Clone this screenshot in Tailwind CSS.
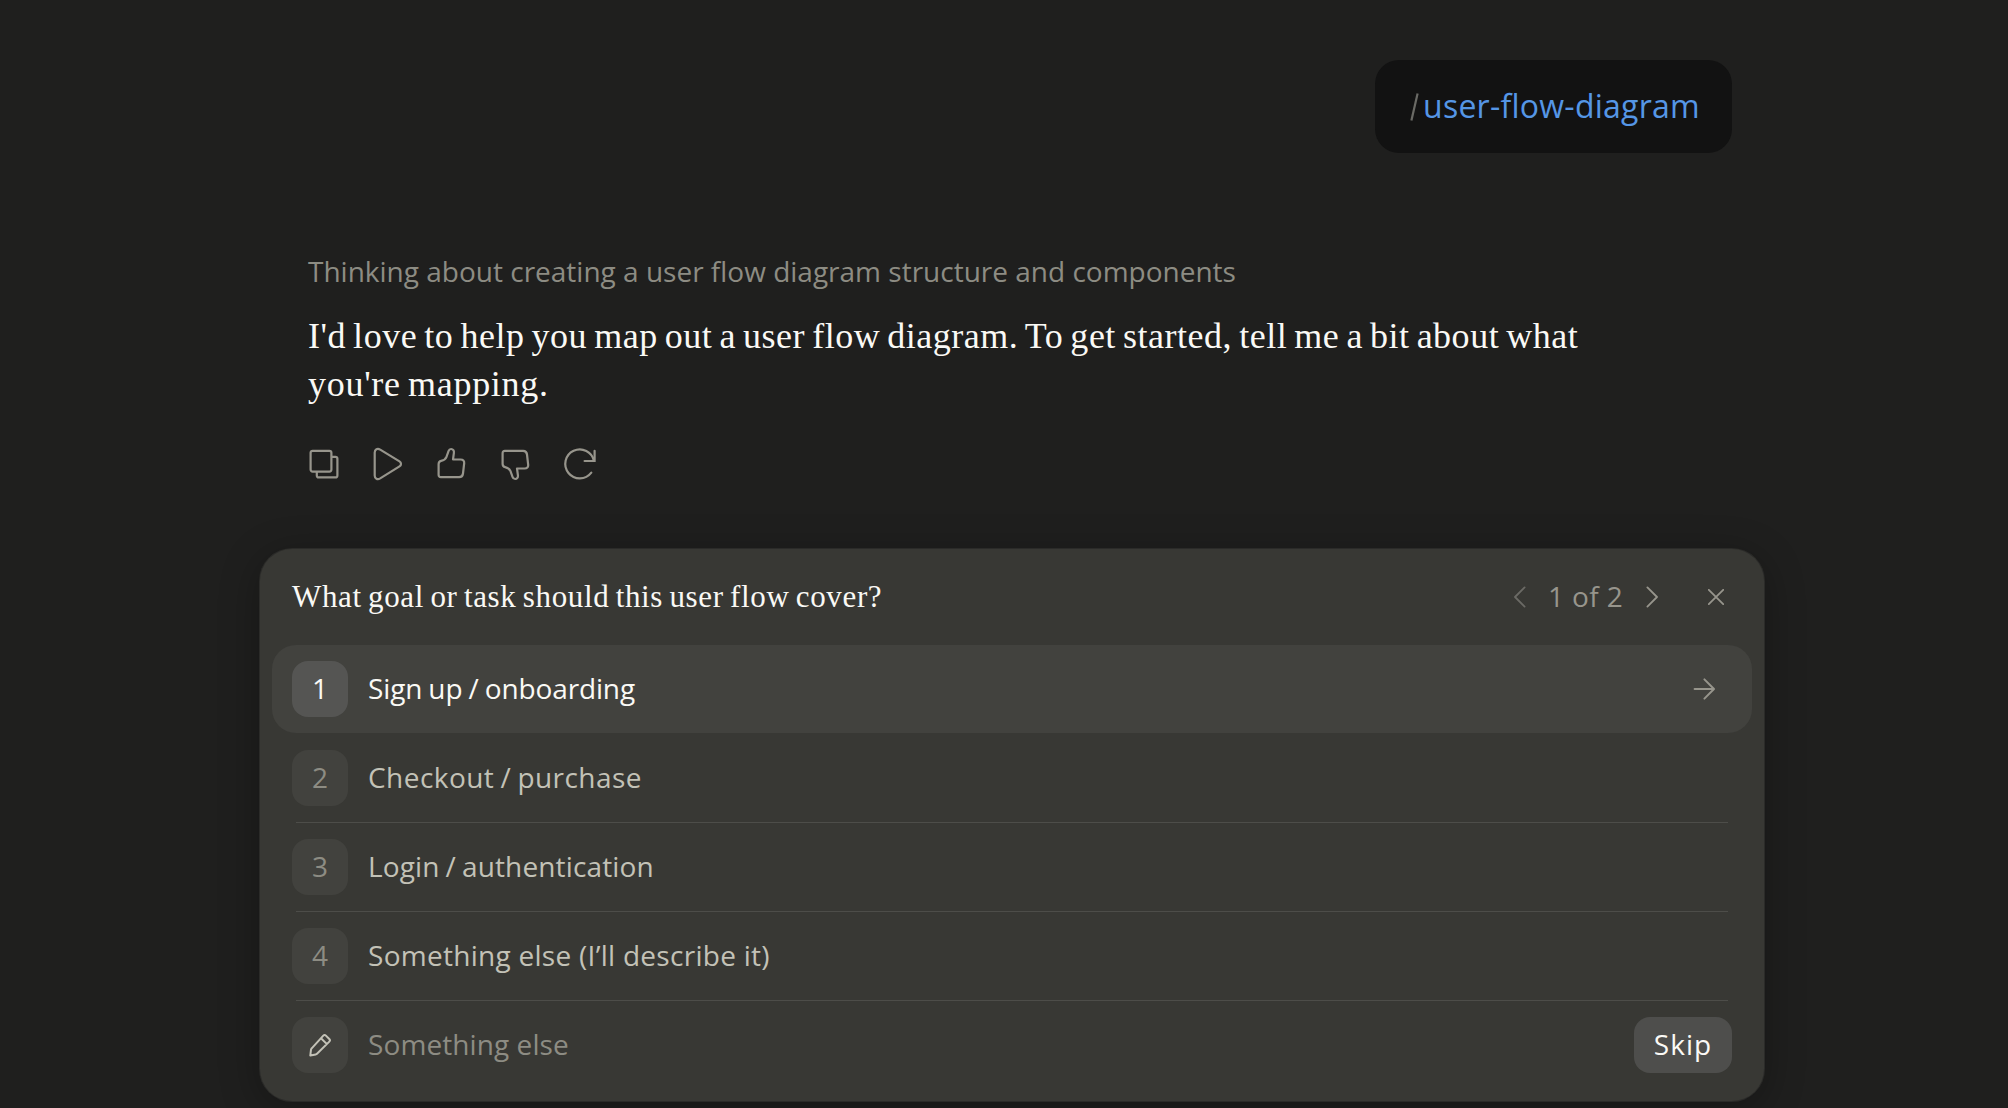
<!DOCTYPE html>
<html lang="en">
<head>
    <meta charset="UTF-8">
    <meta name="viewport" content="width=device-width, initial-scale=1.0">
    <title>User flow diagram</title>
    <script src="https://cdn.jsdelivr.net/npm/@tailwindcss/browser@4"></script>
</head>
<body class="bg-[#1f1f1e] h-screen overflow-hidden font-['Open_Sans',sans-serif] text-[28px] text-[#c3c2b7]">
    <div class="w-[1504px] ml-[260px] pt-[60px]">
        <!-- User message -->
        <div class="flex justify-end pr-8">
            <div class="flex items-center w-[357px] h-[93px] pl-9 pb-px rounded-3xl bg-[#121212] text-[32px] whitespace-nowrap">
                <span class="w-[12px] text-[#6a6a65]"><svg class="w-[9px] h-7 mt-0.5 -ml-px" viewBox="0 0 9 28" fill="none" stroke="currentColor" stroke-width="2.2"><path d="M7.6 0.5 1.4 27.5" /></svg></span>
                <span class="tracking-[0.25px] leading-10 text-[#5596e6]">user-flow-diagram</span>
            </div>
        </div>

        <!-- Reply -->
        <div class="pl-12 pt-[98px]">
            <div class="h-10 leading-10 text-[#8d8c83] whitespace-nowrap">Thinking about creating a user flow diagram structure and components</div>
            <div class="mt-[21px] font-['Liberation_Serif',serif] text-[36px] leading-12 text-[#faf9f5] whitespace-nowrap">
                <p class="tracking-[0.51px] [word-spacing:-2.4px]">I'd love to help you map out a user flow diagram. To get started, tell me a bit about what</p>
                <p class="tracking-[0.71px] [word-spacing:-2.4px]">you're mapping.</p>
            </div>

            <div class="flex gap-8 mt-10 text-[#97958c]">
                <button aria-label="Copy">
                    <svg class="w-8 h-8 overflow-visible" viewBox="0 0 32 32" fill="none" stroke="currentColor" stroke-width="2.2" stroke-linejoin="round">
                        <rect x="2.6" y="2.8" width="20.8" height="20.8" rx="2" />
                        <path d="M23.4 8.8h4a2 2 0 0 1 2 2v16.6a2 2 0 0 1-2 2H10.800a2 2 0 0 1-2-2v-3.800" />
                    </svg>
                </button>
                <button aria-label="Read aloud">
                    <svg class="w-8 h-8 overflow-visible" viewBox="0 0 32 32" fill="none" stroke="currentColor" stroke-width="2.2" stroke-linejoin="round">
                        <path d="M2.700 4.600c0-3.200 2.700-4.600 5.500-3l19.300 11.800c2 1.300 2 3.700 0 5L8.200 30.400c-2.800 1.600-5.500.2-5.500-3z" />
                    </svg>
                </button>
                <button aria-label="Good response">
                    <svg class="w-8 h-8 overflow-visible" viewBox="0 0 32 32" fill="none" stroke="currentColor" stroke-width="2.2" stroke-linejoin="round">
                        <path d="M2.600 16a3.200 3.200 0 0 1 2.500-3.100c2.700-.6 4.500-1.700 5.400-4.100l2-5.600c.5-1.400 1.300-2.200 2.600-2.200 2 0 3.100 1.700 2.800 3.800l-.9 6.700h7.700c2.300 0 3.700 1.400 3.500 3.600l-1.200 10.400c-.3 2.400-1.500 3.600-3.800 3.600H4.900c-1.500 0-2.300-.8-2.300-2.300z" />
                    </svg>
                </button>
                <button aria-label="Bad response">
                    <svg class="w-8 h-8 overflow-visible -scale-y-100" viewBox="0 0 32 32" fill="none" stroke="currentColor" stroke-width="2.2" stroke-linejoin="round">
                        <path d="M2.600 16a3.200 3.200 0 0 1 2.500-3.100c2.700-.6 4.500-1.700 5.400-4.100l2-5.600c.5-1.400 1.300-2.200 2.600-2.200 2 0 3.100 1.700 2.800 3.800l-.9 6.700h7.700c2.300 0 3.700 1.400 3.500 3.600l-1.200 10.400c-.3 2.400-1.500 3.600-3.800 3.600H4.900c-1.500 0-2.300-.8-2.300-2.300z" />
                    </svg>
                </button>
                <button aria-label="Retry">
                    <svg class="w-8 h-8 overflow-visible" viewBox="0 0 32 32" fill="none" stroke="currentColor" stroke-width="2.2" stroke-linecap="round">
                        <path d="M27.300 24.700A14.500 14.500 0 1 1 30 13" />
                        <path d="M30.600 2.800V13H20.600" />
                    </svg>
                </button>
            </div>
        </div>

        <!-- Question card -->
        <div class="mt-[69px] h-[552px] px-3 rounded-[32px] bg-[#383834] shadow-[0_0_0_1px_#2b2b29,0_8px_40px_rgba(0,0,0,0.3)]">
            <div class="flex items-center h-24 pl-5 pr-7">
                <h2 class="flex-1 font-['Liberation_Serif',serif] text-[31px] tracking-[0.64px] [word-spacing:-2px] leading-10 text-[#faf9f5]">What goal or task should this user flow cover?</h2>
                <div class="flex items-center text-[#97958c]">
                    <svg class="w-3 h-6 text-[#6b6a65]" viewBox="0 0 12 24" fill="none" stroke="currentColor" stroke-width="1.8" stroke-linecap="round" stroke-linejoin="round"><path d="M10.600 2.400 1 12l9.600 9.600" /></svg>
                    <span class="w-[76px] ml-[22px] leading-10 tracking-[0.4px] pb-0.5 whitespace-nowrap">1 of 2</span>
                    <svg class="w-3 h-6 ml-[22px]" viewBox="0 0 12 24" fill="none" stroke="currentColor" stroke-width="1.8" stroke-linecap="round" stroke-linejoin="round"><path d="M1.400 2.400 11 12l-9.600 9.600" /></svg>
                    <svg class="w-4 h-4 ml-[50px]" viewBox="0 0 16 16" fill="none" stroke="currentColor" stroke-width="1.8" stroke-linecap="round"><path d="M.8.8l14.400 14.400M15.200.8.8 15.200" /></svg>
                </div>
            </div>

            <div class="flex items-center h-[88px] px-5 rounded-3xl bg-[#42423e] text-[#faf9f5]">
                <span class="flex justify-center w-14 h-14 rounded-2xl bg-[#555553] leading-[54px]">1</span>
                <span class="flex-1 pl-5 pb-0.5 tracking-[-0.14px] [word-spacing:-1px]">Sign up / onboarding</span>
                <svg class="w-6 h-6 mr-4 text-[#97958c]" viewBox="0 0 24 24" fill="none" stroke="currentColor" stroke-width="2" stroke-linecap="round" stroke-linejoin="round"><path d="M2.600 12h19M12.400 2.400 22 12l-9.600 9.600" /></svg>
            </div>

            <div class="flex items-center h-[89px] pt-px px-5">
                <span class="flex justify-center w-14 h-14 rounded-2xl bg-[#42423e] leading-[54px] text-[#8d8c83]">2</span>
                <span class="pl-5 pb-0.5 tracking-[0.45px] [word-spacing:-1.5px]">Checkout / purchase</span>
            </div>
            <div class="h-px mx-6 bg-[#4d4d49]"></div>
            <div class="flex items-center h-[88px] px-5">
                <span class="flex justify-center w-14 h-14 rounded-2xl bg-[#42423e] leading-[54px] text-[#8d8c83]">3</span>
                <span class="pl-5 pb-0.5 tracking-[0.15px] [word-spacing:-1.5px]">Login / authentication</span>
            </div>
            <div class="h-px mx-6 bg-[#4d4d49]"></div>
            <div class="flex items-center h-[88px] px-5">
                <span class="flex justify-center w-14 h-14 rounded-2xl bg-[#42423e] leading-[54px] text-[#8d8c83]">4</span>
                <span class="pl-5 pb-0.5 tracking-[0.28px]">Something else (I’ll describe it)</span>
            </div>
            <div class="h-px mx-6 bg-[#4d4d49]"></div>
            <div class="flex items-center h-[88px] px-5">
                <span class="flex items-center justify-center w-14 h-14 rounded-2xl bg-[#42423e]">
                    <svg class="w-6 h-6" viewBox="0 0 24 24" fill="none" stroke="currentColor" stroke-width="2" stroke-linejoin="round">
                        <path d="M15.300 2.600c.8-.8 1.800-.8 2.600 0l3.400 3.400c.8.8.8 1.800 0 2.600L9 20.700c-.4.4-.8.600-1.300.700l-5.400 1.100.7-5.800c.1-.6.300-1 .7-1.400zM13 5.200l5.700 5.700" />
                    </svg>
                </span>
                <span class="flex-1 pl-5 pb-0.5 tracking-[0.09px] text-[#8d8c83]">Something else</span>
                <button class="w-[98px] h-14 pb-0.5 rounded-2xl bg-[#4e4e4c] font-medium tracking-[1px] text-[#faf9f5]">Skip</button>
            </div>
        </div>
    </div>
</body>
</html>
